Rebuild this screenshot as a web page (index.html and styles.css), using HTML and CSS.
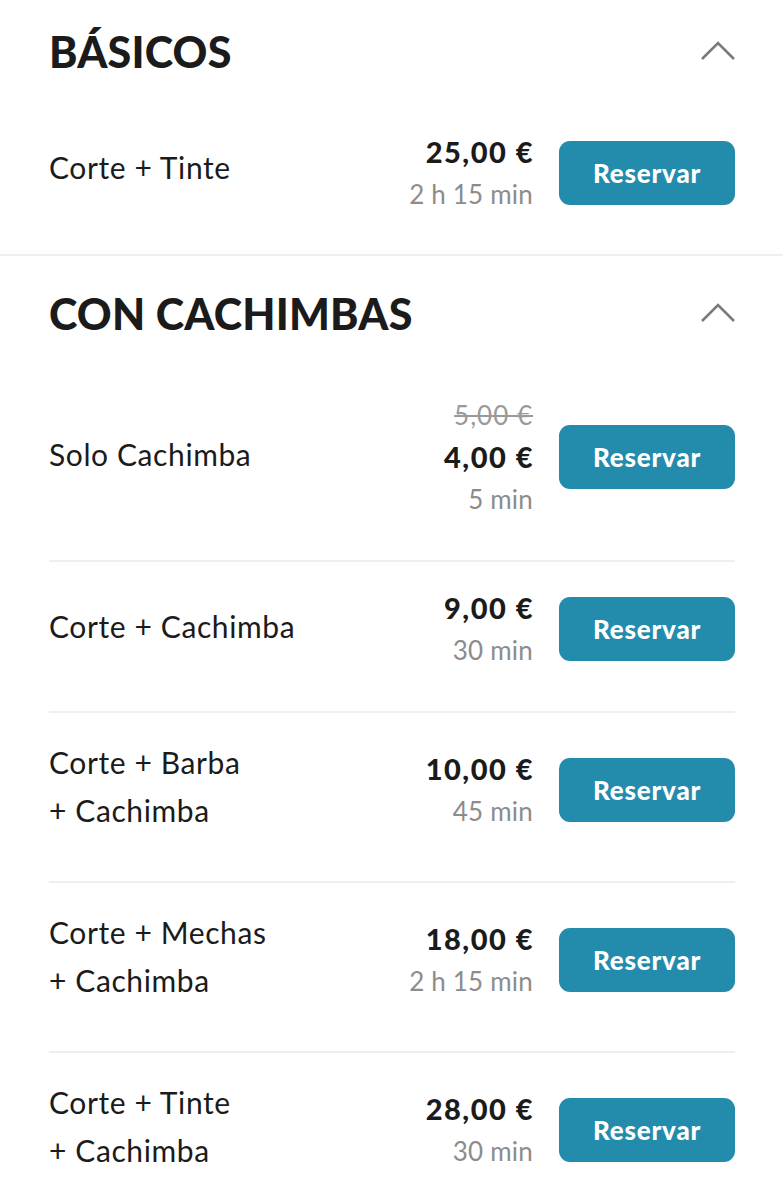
FILE: index.html
```html
<!DOCTYPE html>
<html lang="es">
<head>
  <meta charset="UTF-8" />
  <meta name="viewport" content="width=device-width, initial-scale=1.0" />
  <title>Servicios</title>
  <link rel="stylesheet" href="styles.css">
</head>
<body>
  <section class="group group-first">
    <div class="group-head">
      <h2 class="group-title">BÁSICOS</h2>
      <svg class="chevron" width="36" height="20" viewBox="0 0 36 20"><path d="M2 18 L18 2 L34 18" fill="none" stroke="#7a7a7a" stroke-width="2.6"/></svg>
    </div>
    <div class="service">
      <div class="service-name">Corte + Tinte</div>
      <div class="service-info">
        <div class="price">25,00 €</div>
        <div class="duration">2 h 15 min</div>
      </div>
      <button class="book">Reservar</button>
    </div>
  </section>

  <section class="group">
    <div class="group-head">
      <h2 class="group-title">CON CACHIMBAS</h2>
      <svg class="chevron" width="36" height="20" viewBox="0 0 36 20"><path d="M2 18 L18 2 L34 18" fill="none" stroke="#7a7a7a" stroke-width="2.6"/></svg>
    </div>
    <div class="service">
      <div class="service-name">Solo Cachimba</div>
      <div class="service-info">
        <div class="old-price">5,00 €</div>
        <div class="price">4,00 €</div>
        <div class="duration">5 min</div>
      </div>
      <button class="book">Reservar</button>
    </div>
    <div class="service">
      <div class="service-name">Corte + Cachimba</div>
      <div class="service-info">
        <div class="price">9,00 €</div>
        <div class="duration">30 min</div>
      </div>
      <button class="book">Reservar</button>
    </div>
    <div class="service">
      <div class="service-name">Corte + Barba<br>+ Cachimba</div>
      <div class="service-info">
        <div class="price">10,00 €</div>
        <div class="duration">45 min</div>
      </div>
      <button class="book">Reservar</button>
    </div>
    <div class="service">
      <div class="service-name">Corte + Mechas<br>+ Cachimba</div>
      <div class="service-info">
        <div class="price">18,00 €</div>
        <div class="duration">2 h 15 min</div>
      </div>
      <button class="book">Reservar</button>
    </div>
    <div class="service">
      <div class="service-name">Corte + Tinte<br>+ Cachimba</div>
      <div class="service-info">
        <div class="price">28,00 €</div>
        <div class="duration">30 min</div>
      </div>
      <button class="book">Reservar</button>
    </div>
  </section>
</body>
</html>
```

FILE: styles.css
```css
body { margin: 0; background: #fff; font-family: Lato, "Liberation Sans", sans-serif; color: #1b1b1b; }
.group { padding: 17px 48px 0 49px; }
.group-first { padding-top: 11px; border-bottom: 2px solid #efefef; }
.group-head { display: flex; align-items: center; justify-content: space-between; height: 80px; margin-bottom: 16px; }
.group-title { margin: 0; font-size: 43px; font-weight: 900; letter-spacing: 0.2px; }
.chevron { display: block; margin-right: -1px; }
.service { display: flex; align-items: center; padding: 25px 0 40px; }
.service + .service { border-top: 2px solid #efefef; }
.group-first .service { padding: 24px 0 39px; }
.group-first .service-name { padding-bottom: 12px; }
.service-name { flex: 1; font-size: 30px; line-height: 48px; padding-bottom: 7px; letter-spacing: 0.6px; }
.service-info { text-align: right; margin-right: 26px; }
.price, .old-price, .duration { line-height: 42px; }
.price { font-size: 29px; font-weight: 900; letter-spacing: 1.5px; margin-right: -1px; }
.old-price { font-size: 26px; color: #9a9a9a; text-decoration: line-through; letter-spacing: 1px; }
.duration { font-size: 26px; color: #8c8c8c; letter-spacing: 0.2px; }
.book { width: 176px; height: 64px; border: 0; border-radius: 11px; background: #238bab; color: #fff; font-family: inherit; font-size: 26px; font-weight: 900; letter-spacing: 0.8px; cursor: pointer; }
```
